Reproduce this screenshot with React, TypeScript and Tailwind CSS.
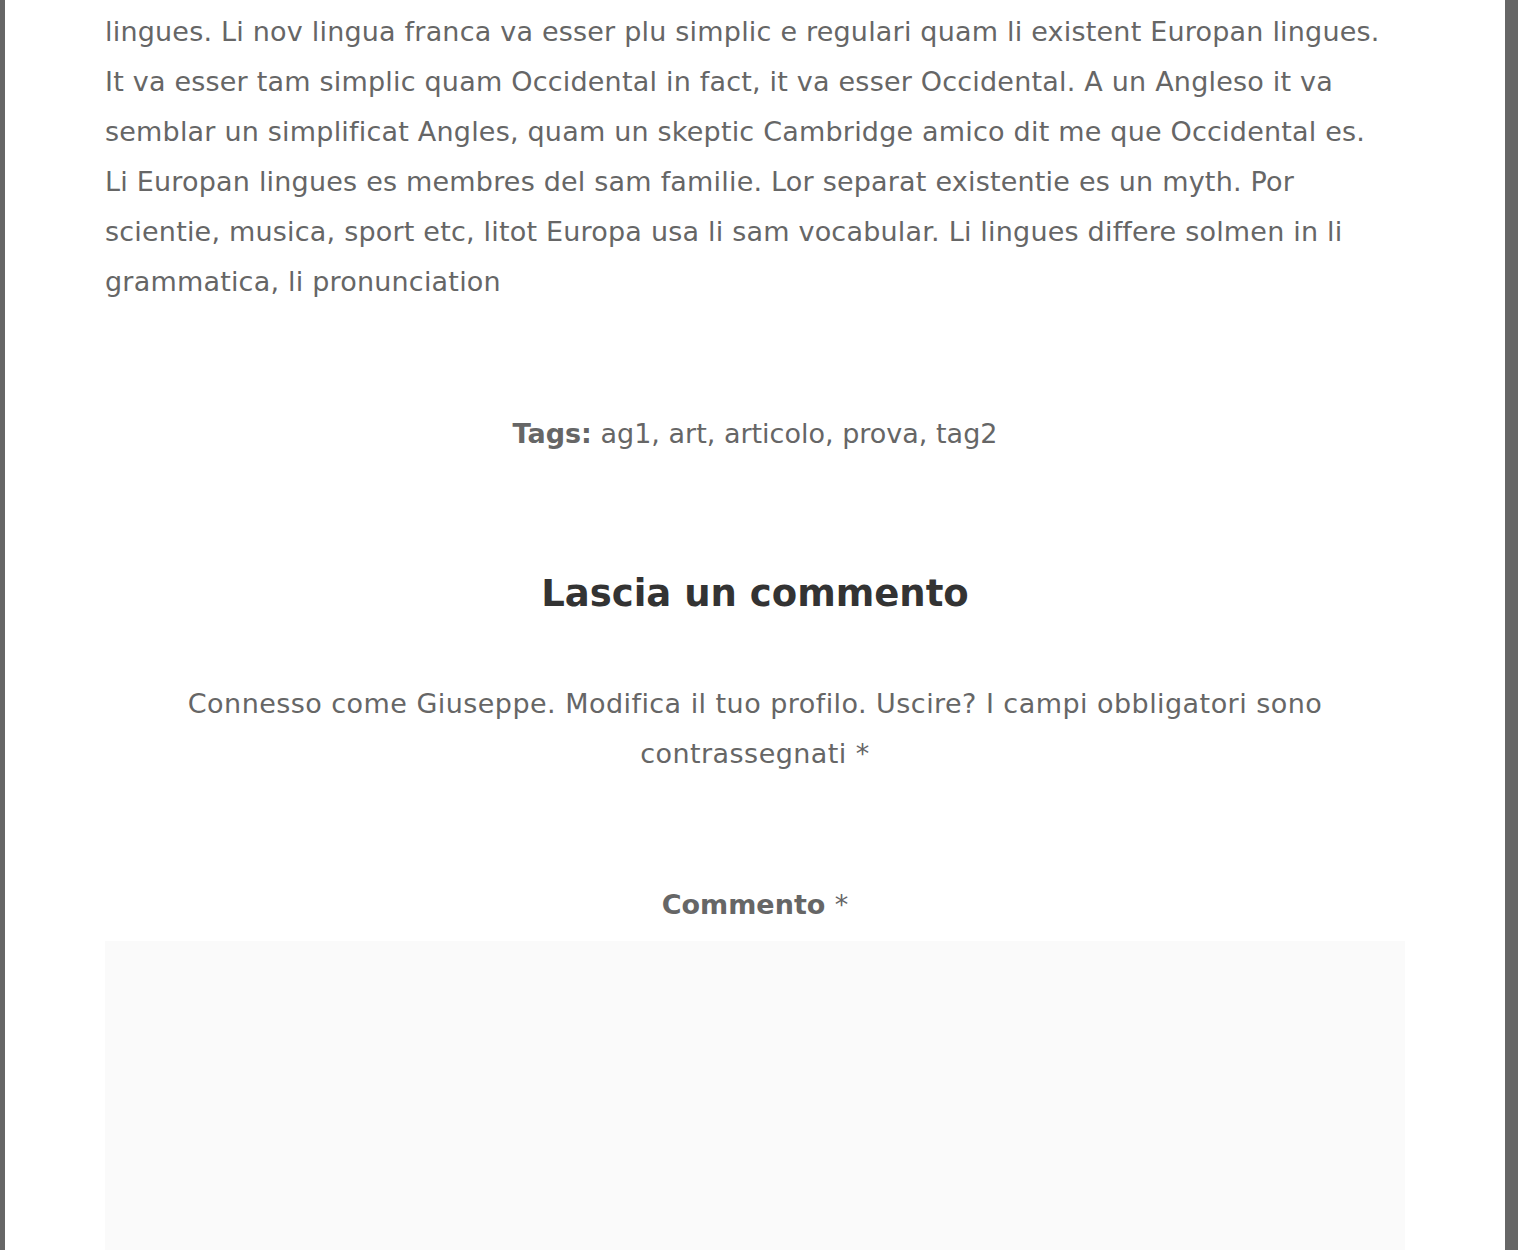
const lines = [
  "lingues. Li nov lingua franca va esser plu simplic e regulari quam li existent Europan lingues.",
  "It va esser tam simplic quam Occidental in fact, it va esser Occidental. A un Angleso it va",
  "semblar un simplificat Angles, quam un skeptic Cambridge amico dit me que Occidental es.",
  "Li Europan lingues es membres del sam familie. Lor separat existentie es un myth. Por",
  "scientie, musica, sport etc, litot Europa usa li sam vocabular. Li lingues differe solmen in li",
  "grammatica, li pronunciation",
];

export default function App() {
  return (
    <div className="min-h-[1250px] border-l-[5px] border-r-[13px] border-[#666] bg-white font-['DejaVu_Sans',sans-serif] text-[#666]">
      <main className="mx-auto w-[1300px] pt-[7px]">
        <p className="text-[27px] leading-[50px] tracking-[0.2px]">
          {lines.map((l) => (
            <span key={l} className="block whitespace-nowrap">
              {l}
            </span>
          ))}
        </p>

        <div className="mt-[102px] text-center text-[27px] leading-[50px]">
          <span className="font-bold">Tags:</span> ag1, art, articolo, prova, tag2
        </div>

        <section className="mt-[110px]">
          <h3 className="text-center text-[37px] font-bold leading-[50px] text-[#333]">
            Lascia un commento
          </h3>
          <p className="mx-auto mt-[60px] w-[1200px] text-center text-[27px] leading-[50px] tracking-[0.45px]">
            Connesso come Giuseppe. Modifica il tuo profilo. Uscire? I campi obbligatori sono
            contrassegnati *
          </p>
          <div className="mt-[101px] text-center text-[27px] font-bold leading-[50px]">
            Commento <span className="font-normal">*</span>
          </div>
          <textarea className="mt-[11px] block h-[320px] w-full resize-none bg-[#fafafa] outline-none" />
        </section>
      </main>
    </div>
  );
}
